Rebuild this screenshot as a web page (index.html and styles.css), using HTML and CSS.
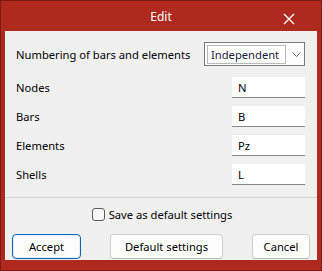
FILE: index.html
```html
<!DOCTYPE html>
<html lang="en">
<head>
  <meta charset="UTF-8">
  <title>Edit</title>
  <link rel="stylesheet" href="styles.css">
</head>
<body>
  <div class="window">
    <div class="titlebar">
      <span class="title">Edit</span>
      <span class="close">
        <svg width="12" height="12" viewBox="0 0 12 12"><path d="M1 1 L11 11 M11 1 L1 11" stroke="#fff" stroke-width="1.4" fill="none"/></svg>
      </span>
    </div>

    <div class="content">
      <div class="settings">
        <div class="row first">
          <label>Numbering of bars and elements</label>
          <div class="select">
            <span class="select-value">Independent</span>
            <svg class="chevron" width="9" height="5" viewBox="0 0 9 5"><path d="M0.5 0.5 L4.5 4.5 L8.5 0.5" stroke="#606060" stroke-width="1" fill="none"/></svg>
          </div>
        </div>
        <div class="row">
          <label>Nodes</label>
          <input type="text" value="N">
        </div>
        <div class="row">
          <label>Bars</label>
          <input type="text" value="B">
        </div>
        <div class="row">
          <label>Elements</label>
          <input type="text" value="Pz">
        </div>
        <div class="row">
          <label>Shells</label>
          <input type="text" value="L">
        </div>
      </div>

      <div class="footer">
        <label class="check"><span class="box"></span>Save as default settings</label>
        <div class="buttons">
          <button class="accept">Accept</button>
          <button class="defaults">Default settings</button>
          <button class="cancel">Cancel</button>
        </div>
      </div>
    </div>
  </div>
</body>
</html>
```

FILE: styles.css
```css
body {
  margin: 0;
  font-family: "Noto Sans", "Open Sans", sans-serif;
  font-size: 11.2px;
  color: #000;
}

.window {
  width: 322px;
  height: 271px;
  box-sizing: border-box;
  border: 1px solid #7d1a12;
  background-color: #b0291f;
  padding: 0 4px 10px 4px;
  display: flex;
  flex-direction: column;
}

.titlebar {
  height: 30px;
  display: flex;
  align-items: center;
  justify-content: center;
  position: relative;
  color: #fff;
}

.title {
  font-size: 12px;
  margin-top: 1px;
}

.close {
  position: absolute;
  right: 22px;
  top: 12px;
  width: 12px;
  height: 12px;
}

.close svg {
  display: block;
}

.content {
  flex: 1;
  background-color: #f0f0f0;
  display: flex;
  flex-direction: column;
}

.settings {
  padding: 11px 12px 12px 11px;
  border-bottom: 1px solid #d6d6d6;
  display: flex;
  flex-direction: column;
  gap: 8px;
}

.row {
  display: flex;
  align-items: center;
  justify-content: space-between;
  height: 21px;
}

.row.first {
  height: 24px;
  margin-bottom: 3px;
}

.select {
  width: 101px;
  height: 24px;
  box-sizing: border-box;
  border: 1px solid #7a7a7a;
  background-color: #fdfdfd;
  display: flex;
  align-items: center;
  padding: 0 2px;
}

.select-value {
  width: 79px;
  height: 19px;
  box-sizing: border-box;
  border: 1px solid #b9b9b9;
  background-color: #fff;
  color: #1a1a3a;
  padding-left: 3px;
  line-height: 17px;
}

.chevron {
  margin-left: 6px;
}

input {
  width: 73px;
  height: 21px;
  box-sizing: border-box;
  border: none;
  border-bottom: 1px solid #868686;
  background-color: #fff;
  font-family: inherit;
  font-size: 11.2px;
  color: #000;
  padding: 0 0 0 6px;
  margin: 0;
}

.footer {
  flex: 1;
  display: flex;
  flex-direction: column;
  padding: 9px 7px 1px 7px;
}

.check {
  display: flex;
  align-items: center;
  justify-content: center;
  gap: 4px;
  height: 14px;
  margin-left: 2px;
}

.box {
  width: 13px;
  height: 13px;
  box-sizing: border-box;
  border: 1px solid #5c5c5c;
  border-radius: 3px;
  background-color: #f7f7f7;
}

.buttons {
  margin-top: auto;
  display: flex;
  justify-content: space-between;
}

button {
  height: 25px;
  box-sizing: border-box;
  border: 1px solid #d0d0d0;
  border-bottom-color: #b8b8b8;
  border-radius: 4px;
  background-color: #fdfdfd;
  font-family: inherit;
  font-size: 11.2px;
  color: #000;
  padding: 0;
}

button.accept {
  width: 69px;
  border: 1px solid #0067c0;
  box-shadow: inset 0 0 0 1px #e6f0fa;
}

button.defaults {
  width: 113px;
}

button.cancel {
  width: 58px;
}
```
